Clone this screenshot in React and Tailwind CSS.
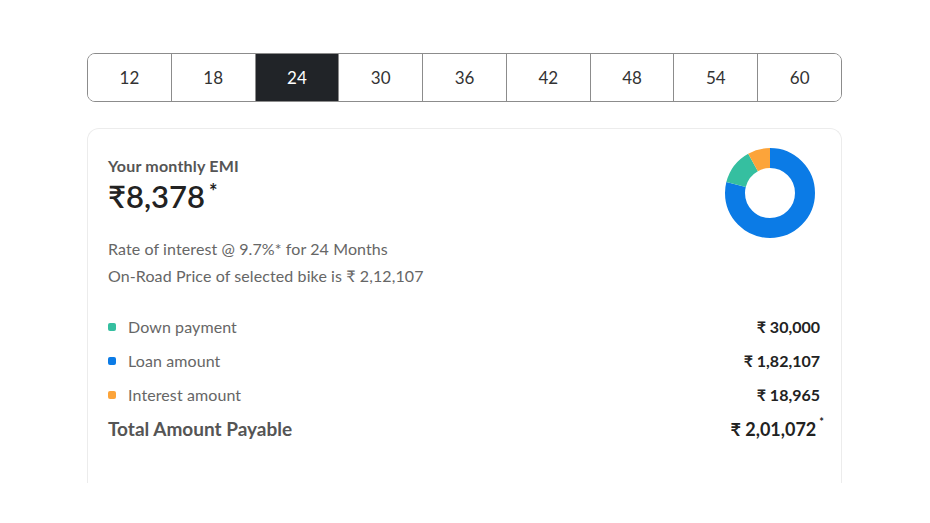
import React, { useState } from "react";

const tenures = [12, 18, 24, 30, 36, 42, 48, 54, 60];

const parts = [
  { label: "Down payment", value: 30000, color: "#35bfa0", text: "₹ 30,000" },
  { label: "Loan amount", value: 182107, color: "#0b7be6", text: "₹ 1,82,107" },
  { label: "Interest amount", value: 18965, color: "#fca43a", text: "₹ 18,965" },
];

function Donut() {
  const total = parts.reduce((s, p) => s + p.value, 0);
  const r = 35;
  const c = 2 * Math.PI * r;
  // loan goes first clockwise from 12 o'clock, then down payment, then interest
  const order = [parts[1], parts[0], parts[2]];
  let offset = 0;
  return (
    <svg width="92" height="92" viewBox="0 0 92 92">
      <g transform="rotate(-90 46 46)">
        {order.map(p => {
          const len = (p.value / total) * c;
          const el = (
            <circle
              key={p.label}
              cx="46"
              cy="46"
              r={r}
              fill="none"
              stroke={p.color}
              strokeWidth="20"
              strokeDasharray={`${len} ${c - len}`}
              strokeDashoffset={-offset}
            />
          );
          offset += len;
          return el;
        })}
      </g>
    </svg>
  );
}

export default function App() {
  const [active, setActive] = useState(24);

  return (
    <div className="min-h-[523px] bg-white pt-[53px]" style={{ fontFamily: "Lato, 'Noto Sans', sans-serif" }}>
      <div className="ml-[87px] w-[755px]">
        {/* Tenure selector */}
        <div className="flex h-[49px] rounded-lg border border-[#8c8c8c] overflow-hidden">
          {tenures.map((t, i) => (
            <button
              key={t}
              onClick={() => setActive(t)}
              className={
                "flex-1 flex items-center justify-center text-[17px] " +
                (i > 0 ? "border-l border-[#8c8c8c] " : "") +
                (active === t ? "bg-[#212428] text-white" : "bg-white text-[#333]")
              }
            >
              {t}
            </button>
          ))}
        </div>

        {/* EMI card */}
        <div className="mt-[26px] h-[355px] rounded-t-xl border-x border-t border-[#ececec] pl-5 pr-[21px] pt-[18px]">
          <div className="flex justify-between">
            <div className="pt-[9px]">
              <div className="text-[16px] leading-[20px] font-bold text-[#555] tracking-[0.2px]">Your monthly EMI</div>
              <div className="mt-[3px] flex items-start text-[31px] leading-[34px] font-semibold text-[#222] whitespace-nowrap">
                ₹8,378<span className="ml-[4px] text-[20px] leading-[20px] font-bold mt-[2px]">*</span>
              </div>
              <div className="mt-[22px] text-[16px] leading-[27px] text-[#666] tracking-[0.1px]">
                <div>Rate of interest @ 9.7%* for 24 Months</div>
                <div>On-Road Price of selected bike is ₹ 2,12,107</div>
              </div>
            </div>
            <div className="mr-1">
              <Donut />
            </div>
          </div>

          <div className="mt-[21px]">
            {parts.map(p => (
              <div key={p.label} className="flex items-center justify-between h-[34px]">
                <div className="flex items-center gap-3 text-[16px] text-[#666] tracking-[0.1px]">
                  <span className="w-2 h-2 rounded-[2px]" style={{ backgroundColor: p.color }} />
                  {p.label}
                </div>
                <div className="text-[16px] font-bold text-[#222] whitespace-nowrap">{p.text}</div>
              </div>
            ))}
            <div className="flex items-center justify-between h-[34px]">
              <div className="text-[19px] font-bold text-[#555]">Total Amount Payable</div>
              <div className="flex items-start text-[18px] font-bold text-[#222] whitespace-nowrap -mr-1">
                ₹ 2,01,072<span className="ml-[3px] text-[11px] leading-[12px]">*</span>
              </div>
            </div>
          </div>
        </div>
      </div>
    </div>
  );
}
